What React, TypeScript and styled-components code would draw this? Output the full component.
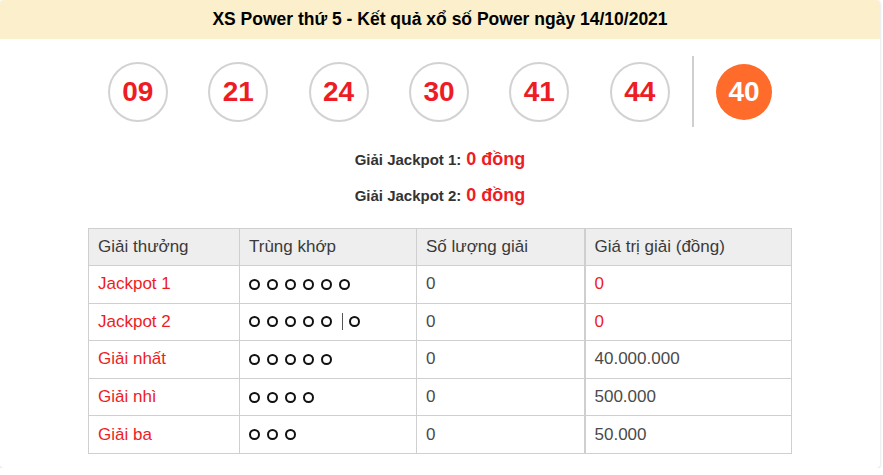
import { FC } from 'react';
import styled, { createGlobalStyle } from 'styled-components';

const GlobalStyle = createGlobalStyle`
  body {
    margin: 0;
    background: #fff;
    font-family: 'Liberation Sans', Arial, sans-serif;
  }
`;

const mainNumbers = ['09', '21', '24', '30', '41', '44'];
const powerNumber = '40';

type Prize = {
  name: string;
  match: number;
  extra?: boolean;
  count: string;
  value: string;
  highlight?: boolean;
};

const prizes: Prize[] = [
  { name: 'Jackpot 1', match: 6, count: '0', value: '0', highlight: true },
  { name: 'Jackpot 2', match: 5, extra: true, count: '0', value: '0', highlight: true },
  { name: 'Giải nhất', match: 5, count: '0', value: '40.000.000' },
  { name: 'Giải nhì', match: 4, count: '0', value: '500.000' },
  { name: 'Giải ba', match: 3, count: '0', value: '50.000' },
];

const App: FC = () => {
  return (
    <>
      <GlobalStyle />
      <ResultCardStyled>
        <CardHeader>XS Power thứ 5 - Kết quả xổ số Power ngày 14/10/2021</CardHeader>

        <BallRow>
          {mainNumbers.map((n) => (
            <Ball key={n}>{n}</Ball>
          ))}
          <BallDivider />
          <Ball $power>{powerNumber}</Ball>
        </BallRow>

        <JackpotList>
          <JackpotLine>
            Giải Jackpot 1: <JackpotValue>0 đồng</JackpotValue>
          </JackpotLine>
          <JackpotLine>
            Giải Jackpot 2: <JackpotValue>0 đồng</JackpotValue>
          </JackpotLine>
        </JackpotList>

        <PrizeTable>
          <colgroup>
            <col style={{ width: 151 }} />
            <col style={{ width: 177 }} />
            <col style={{ width: 168 }} />
            <col style={{ width: 207 }} />
          </colgroup>
          <thead>
            <tr>
              <HeadCell>Giải thưởng</HeadCell>
              <HeadCell>Trùng khớp</HeadCell>
              <HeadCell>Số lượng giải</HeadCell>
              <HeadCell $thick>Giá trị giải (đồng)</HeadCell>
            </tr>
          </thead>
          <tbody>
            {prizes.map((p) => (
              <tr key={p.name}>
                <Cell $red>{p.name}</Cell>
                <Cell>
                  <MatchDots>
                    {Array.from({ length: p.match }).map((_, i) => (
                      <Dot key={i} />
                    ))}
                    {p.extra && (
                      <>
                        <DotBar />
                        <Dot />
                      </>
                    )}
                  </MatchDots>
                </Cell>
                <Cell>{p.count}</Cell>
                <Cell $red={p.highlight} $thick>
                  {p.value}
                </Cell>
              </tr>
            ))}
          </tbody>
        </PrizeTable>
      </ResultCardStyled>
    </>
  );
};

const ResultCardStyled = styled.div`
  width: 880px;
  height: 468px;
  box-sizing: border-box;
  background: #fff;
  border-radius: 4px;
  box-shadow: 0 1px 3px rgba(0, 0, 0, 0.18);
  overflow: hidden;
  display: flex;
  flex-direction: column;
`;

const CardHeader = styled.div`
  height: 39px;
  background: #fcefcb;
  display: flex;
  align-items: center;
  justify-content: center;
  font-size: 17.5px;
  font-weight: bold;
  color: #000;
`;

const BallRow = styled.div`
  margin-top: 17px;
  height: 71px;
  display: flex;
  align-items: center;
  justify-content: center;
`;

const Ball = styled.div<{ $power?: boolean }>`
  box-sizing: border-box;
  width: ${(p) => (p.$power ? 56 : 60)}px;
  height: ${(p) => (p.$power ? 56 : 60)}px;
  margin: 0 20.2px;
  border-radius: 50%;
  border: ${(p) => (p.$power ? 'none' : '2px solid #d2d2d2')};
  background: ${(p) => (p.$power ? '#ff6b2b' : '#fff')};
  color: ${(p) => (p.$power ? '#fff' : '#ee1c25')};
  display: flex;
  align-items: center;
  justify-content: center;
  font-size: 28px;
  font-weight: bold;
`;

const BallDivider = styled.div`
  width: 2px;
  height: 71px;
  margin: 0 2px;
  background: #cfcfcf;
`;

const JackpotList = styled.div`
  margin-top: 14px;
  display: flex;
  flex-direction: column;
  align-items: center;
`;

const JackpotLine = styled.div`
  height: 36px;
  display: flex;
  align-items: center;
  gap: 5px;
  font-size: 15px;
  font-weight: bold;
  color: #333;
`;

const JackpotValue = styled.span`
  font-size: 18px;
  color: #ee1c25;
`;

const PrizeTable = styled.table`
  margin: 15px auto 0;
  width: 703px;
  table-layout: fixed;
  border-collapse: collapse;
  font-size: 17px;
  color: #444;
`;

const HeadCell = styled.th<{ $thick?: boolean }>`
  height: 37px;
  padding: 0 8px 0 9px;
  box-sizing: border-box;
  text-align: left;
  font-weight: normal;
  color: #3a3a3a;
  background: #eeeeee;
  border: 1px solid #cfcfcf;
  border-left-width: ${(p) => (p.$thick ? 2 : 1)}px;
`;

const Cell = styled.td<{ $red?: boolean; $thick?: boolean }>`
  height: 37.6px;
  padding: 0 8px 0 9px;
  box-sizing: border-box;
  color: ${(p) => (p.$red ? '#ee1c25' : '#4a4a4a')};
  border: 1px solid #cfcfcf;
  border-left-width: ${(p) => (p.$thick ? 2 : 1)}px;
`;

const MatchDots = styled.div`
  display: flex;
  align-items: center;
`;

const Dot = styled.span`
  box-sizing: border-box;
  width: 11px;
  height: 11px;
  margin-right: 7px;
  border: 2px solid #111;
  border-radius: 50%;
`;

const DotBar = styled.span`
  width: 1px;
  height: 17px;
  margin: 0 6px 0 3px;
  background: #555;
`;

export default App;
